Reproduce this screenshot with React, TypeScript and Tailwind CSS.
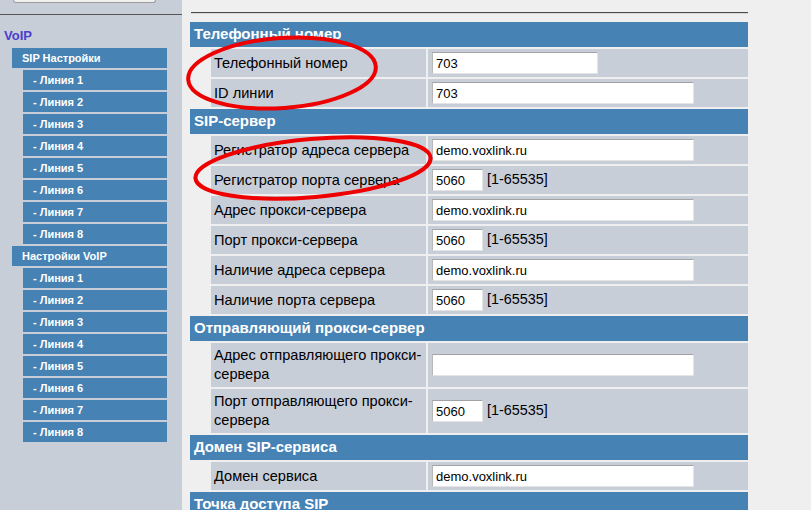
import React from 'react';

const lines = ['- Линия 1', '- Линия 2', '- Линия 3', '- Линия 4', '- Линия 5', '- Линия 6', '- Линия 7', '- Линия 8'];

const Header = ({ title }: { title: string }) => (
  <div className="h-[25px] bg-[#4682b4] pl-[4px] flex items-center text-white font-bold text-[15px]">{title}</div>
);

const Field = ({ value, w }: { value: string; w: string }) => (
  <input
    readOnly
    value={value}
    className={`h-[22px] ${w} bg-white border border-t-[#a3a3a3] border-l-[#b8b8b8] border-r-[#e4e4e4] border-b-[#e4e4e4] px-[3px] text-[13px] text-black outline-none font-['Liberation_Sans',Arial,sans-serif]`}
  />
);

const Row = ({ label, children, tall }: { label: React.ReactNode; children: React.ReactNode; tall?: boolean }) => (
  <div className={`grid grid-cols-[19px_215px_1fr] gap-x-[2px] ${tall ? 'h-[44px]' : 'h-[28px]'}`}>
    <div />
    <div className="bg-[#c8ced8] pl-[3px] flex items-center text-[14.6px] leading-[19px] text-black">{label}</div>
    <div className="bg-[#c8ced8] pl-[4px] flex items-center gap-[4px] text-[14.4px] text-black">{children}</div>
  </div>
);

const Port = () => (
  <>
    <Field value="5060" w="w-[51px]" />
    <span>[1-65535]</span>
  </>
);

export default function App() {
  return (
    <div className="w-[811px] h-[510px] bg-[#efefef] flex relative overflow-hidden font-['Liberation_Sans',Arial,sans-serif]">
      {/* sidebar */}
      <aside className="w-[182px] shrink-0 bg-[#c8ced8]">
        <div className="ml-[13px] w-[143px] h-[3px] border border-t-0 border-[#9c9c9c] bg-[#f0f0f0] rounded-b-[3px]" />
        <div className="mt-[11px] h-px bg-[#555]" />
        <div className="mt-[13px] pl-[4px] text-[13px] leading-[15px] font-bold text-[#4b3dcf]">VoIP</div>
        <div className="mt-[5px] ml-[12px] w-[155px] flex flex-col gap-[2px] text-[11px] font-bold text-white">
          <div className="h-[20px] bg-[#4682b4] pl-[10px] flex items-center">SIP Настройки</div>
          {lines.map((l) => (
            <div key={'a' + l} className="ml-[11px] h-[20px] bg-[#4682b4] pl-[10px] flex items-center">{l}</div>
          ))}
          <div className="h-[20px] bg-[#4682b4] pl-[10px] flex items-center">Настройки VoIP</div>
          {lines.map((l) => (
            <div key={'b' + l} className="ml-[11px] h-[20px] bg-[#4682b4] pl-[10px] flex items-center">{l}</div>
          ))}
        </div>
      </aside>

      {/* content */}
      <main className="flex-1 pl-[8px] pt-[12px]">
        <div className="ml-[1px] w-[557px] border-t border-t-[#4a4a4a] border-b border-b-[#d6d6d6]" />
        <div className="mt-[8px] w-[558px] flex flex-col gap-[2px]">
          <Header title="Телефонный номер" />
          <Row label="Телефонный номер"><Field value="703" w="w-[166px]" /></Row>
          <Row label="ID линии"><Field value="703" w="w-[262px]" /></Row>
          <Header title="SIP-сервер" />
          <Row label="Регистратор адреса сервера"><Field value="demo.voxlink.ru" w="w-[262px]" /></Row>
          <Row label="Регистратор порта сервера"><Port /></Row>
          <Row label="Адрес прокси-сервера"><Field value="demo.voxlink.ru" w="w-[262px]" /></Row>
          <Row label="Порт прокси-сервера"><Port /></Row>
          <Row label="Наличие адреса сервера"><Field value="demo.voxlink.ru" w="w-[262px]" /></Row>
          <Row label="Наличие порта сервера"><Port /></Row>
          <Header title="Отправляющий прокси-сервер" />
          <Row tall label={<span>Адрес отправляющего прокси-<br />сервера</span>}><Field value="" w="w-[262px]" /></Row>
          <Row tall label={<span>Порт отправляющего прокси-<br />сервера</span>}><Port /></Row>
          <Header title="Домен SIP-сервиса" />
          <Row label="Домен сервиса"><Field value="demo.voxlink.ru" w="w-[262px]" /></Row>
          <Header title="Точка доступа SIP" />
        </div>
      </main>

      {/* red annotation marks */}
      <svg className="absolute inset-0 pointer-events-none" width="811" height="510">
        <ellipse cx="282" cy="73" rx="94" ry="35" fill="none" stroke="#ee0000" strokeWidth="4" transform="rotate(-4 282 73)" />
        <ellipse cx="313" cy="168" rx="118" ry="29" fill="none" stroke="#ee0000" strokeWidth="4" transform="rotate(-5 313 168)" />
      </svg>
    </div>
  );
}
